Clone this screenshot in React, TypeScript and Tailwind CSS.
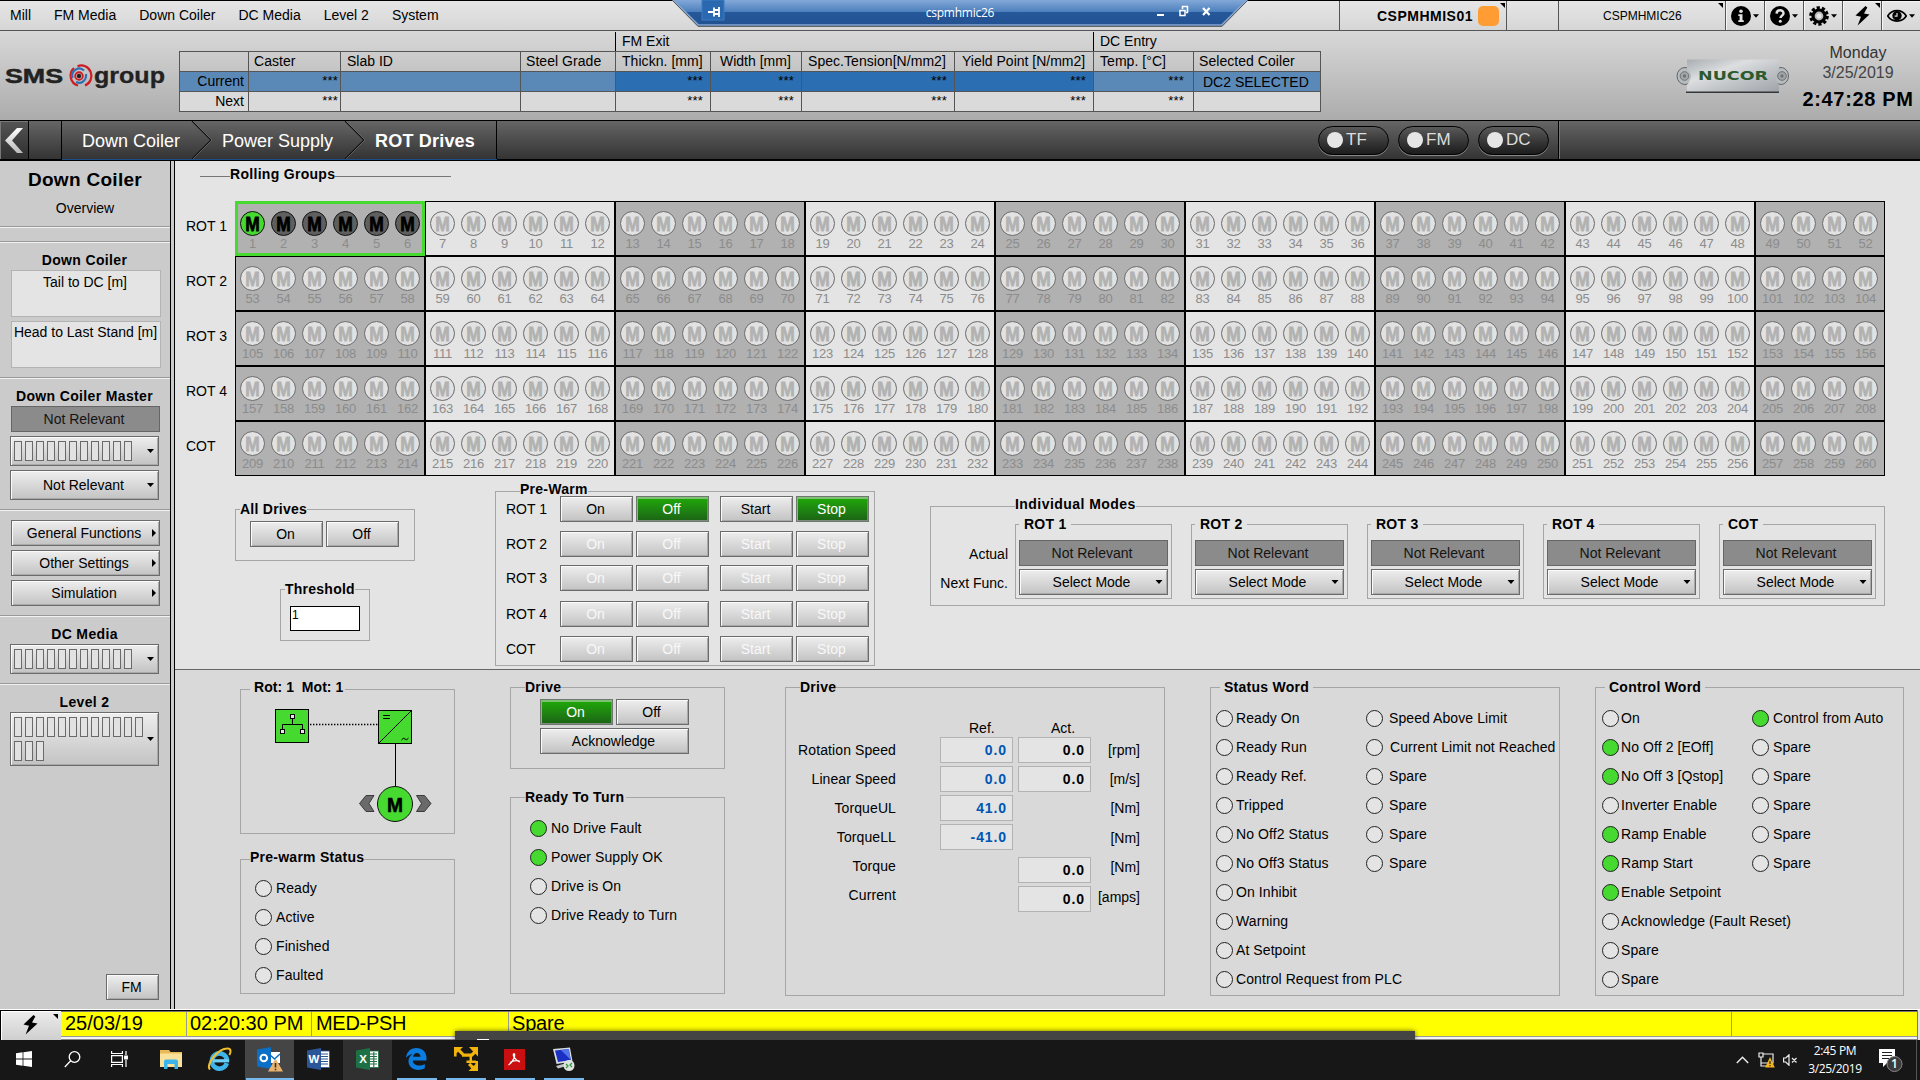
import React from 'react';

type Kids = { children?: React.ReactNode };

/* ---------- shared controls ---------- */

function Caret({ className = '' }: { className?: string }) {
  return (
    <svg width="7" height="4" viewBox="0 0 7 4" className={'shrink-0 ' + className}>
      <path d="M0 0h7L3.5 4z" fill="#000" />
    </svg>
  );
}

function Corner({ className = '' }: { className?: string }) {
  return (
    <svg width="5" height="5" viewBox="0 0 5 5" className={className}>
      <path d="M0 0h5v5z" fill="#000" />
    </svg>
  );
}

const RAISED =
  'border border-[#6b6b6b] bg-linear-to-b from-[#eeeeee] to-[#c3c3c3] shadow-[inset_1px_1px_0_#fbfbfb,inset_-1px_-1px_0_#a9a9a9]';
const GREEN =
  'border border-[#6f776f] bg-linear-to-b from-[#1fab04] to-[#1b6414] shadow-[inset_1px_2px_0_#7cc274,inset_-1px_-1px_0_#7f8a7f]';

function Button({
  children,
  tone = 'normal',
  className = 'w-[73px]',
}: Kids & { tone?: 'normal' | 'green' | 'disabled'; className?: string }) {
  const look =
    tone === 'green' ? GREEN + ' text-white' : tone === 'disabled' ? RAISED + ' text-[#f8f8f8]' : RAISED + ' text-black';
  return (
    <button className={'flex h-[26px] shrink-0 items-center justify-center pr-[2px] ' + look + ' ' + className}>{children}</button>
  );
}

function Readout({ children, className = '' }: Kids & { className?: string }) {
  return (
    <div
      className={
        'flex h-[26px] w-[149px] items-center justify-center border border-[#666] bg-[#8b8b8b] pr-[3px] text-[#141414] ' + className
      }
    >
      {children}
    </div>
  );
}

function Group({
  title,
  bg,
  pad = 'pl-[14px]',
  lift = '-mt-px mb-px',
  tracking = 'tracking-[0.25px]',
  titleClass = '',
  className = '',
  children,
}: Kids & {
  title: string;
  bg: string;
  pad?: string;
  lift?: string;
  tracking?: string;
  titleClass?: string;
  className?: string;
}) {
  return (
    <section className={'flex shrink-0 flex-col border border-[#a6a6a6] ' + className}>
      <div className={'flex h-0 shrink-0 items-center ' + lift + ' ' + pad}>
        <span className={'font-bold whitespace-pre ' + tracking + ' ' + bg + ' ' + titleClass}>{title}</span>
      </div>
      {children}
    </section>
  );
}

const HI = 'bg-[#e4e4e4]';
const LO = 'bg-[#d9d9d9]';

/* ---------- header ---------- */

function MenuBar() {
  return (
    <div className="flex h-[31px] border-t border-b border-t-black border-b-[#555] bg-linear-to-b from-[#e6e6e6] to-[#d6d6d6]">
      <nav className="flex items-center gap-[23px] pb-px pl-[10px]">
        {['Mill', 'FM Media', 'Down Coiler', 'DC Media', 'Level 2', 'System'].map((m) => (
          <span key={m}>{m}</span>
        ))}
      </nav>
      <div className="ml-auto flex">
        <div className="flex w-[167px] items-center border-l border-[#555] pl-[37px]">
          <span className="w-[101px] font-bold tracking-[0.5px]">CSPMHMIS01</span>
          <span className="h-5 w-[21px] shrink-0 rounded-[5px] bg-[#ff9c33]" />
          <Corner className="mt-[2px] ml-[1px] self-start" />
        </div>
        <div className="w-[52px] border-l border-[#555]" />
        <div className="flex w-[167px] items-center border-l border-[#555] pl-[44px] text-xs">
          <span className="w-[115px]">CSPMHMIC26</span>
          <Corner className="mt-[2px] self-start" />
        </div>
        <ToolCell>
          <svg width="20" height="20" viewBox="0 0 20 20">
            <circle cx="10" cy="10" r="10" />
            <circle cx="10" cy="5.3" r="1.8" fill="#e4e4e4" />
            <path d="M7.3 8.3h4.2v6h1.3v1.6H7.3v-1.6h1.3V10H7.3z" fill="#e4e4e4" />
          </svg>
          <Caret className="ml-[2px] w-[6px]" />
        </ToolCell>
        <ToolCell>
          <svg width="20" height="20" viewBox="0 0 20 20">
            <circle cx="10" cy="10" r="10" />
            <path d="M6.600 7.600c.1-4.400 6.900-4.200 6.900-.4 0 2.300-3 2.500-3 4.800" fill="none" stroke="#e4e4e4" strokeWidth="2.500" />
            <circle cx="10.300" cy="15.300" r="1.500" fill="#e4e4e4" />
          </svg>
          <Caret className="ml-[2px] w-[6px]" />
        </ToolCell>
        <ToolCell>
          <svg width="20" height="20" viewBox="0 0 20 20">
            <circle cx="10" cy="10" r="8.300" fill="none" stroke="#000" strokeWidth="3" strokeDasharray="3.200 2.015" />
            <circle cx="10" cy="10" r="6" fill="#bbb" stroke="#000" strokeWidth="3.200" />
            <circle cx="10" cy="10" r="2.500" fill="#e8e8e8" />
          </svg>
          <Caret className="ml-[2px] w-[6px]" />
        </ToolCell>
        <div className="flex w-[39px] border-l border-[#555] pt-[2px] pl-[12px] shadow-[inset_1px_1px_0_#f6f6f6]">
          <Bolt className="mt-[3px]" />
          <Corner className="ml-[5px]" />
        </div>
        <ToolCell>
          <svg width="20" height="16" viewBox="0 0 20 16">
            <path d="M.7 8C5 .8 15 .8 19.300 8 15 14.700 5 14.700.7 8z" fill="none" stroke="#000" strokeWidth="1.700" />
            <circle cx="10" cy="7.700" r="4.700" />
            <path d="M10 5v3.200H7.600" fill="none" stroke="#ddd" strokeWidth="1.200" />
          </svg>
          <Caret className="ml-[2px] w-[6px]" />
        </ToolCell>
      </div>
    </div>
  );
}

function Bolt({ className = '' }: { className?: string }) {
  return (
    <svg width="15" height="20" viewBox="0 0 15 20" className={className}>
      <path d="M10.500 0 .5 9.600l5.500 1.200L2.600 19.600 14.500 8.400 9 7.400l3.300-6z" fill="#000" />
    </svg>
  );
}

function ToolCell({ children }: Kids) {
  return (
    <div className="flex w-[39px] items-center border-l border-[#555] pl-[5px] shadow-[inset_1px_1px_0_#f6f6f6]">
      {children}
    </div>
  );
}

function RemoteBar() {
  return (
    <div className="absolute top-0 left-[672px] h-[27px] w-[576px]">
      <svg width="576" height="27" viewBox="0 0 576 27" className="absolute inset-0">
        <defs>
          <linearGradient id="rb" x1="0" y1="0" x2="0" y2="1">
            <stop offset="0" stopColor="#83a8d8" />
            <stop offset="0.45" stopColor="#4d80bd" />
            <stop offset="0.47" stopColor="#25589a" />
            <stop offset="1" stopColor="#235190" />
          </linearGradient>
        </defs>
        <path d="M0 0 26 26H550L576 0z" fill="url(#rb)" />
        <path d="M1 0 26.500 25H549.500L575 0" fill="none" stroke="#86a7d2" strokeWidth="1.500" />
        <path d="M0 0 26 26.400H550L576 0" fill="none" stroke="#555" strokeWidth="1" />
        <rect x="30" y="0" width="22" height="20" fill="#2a68b0" stroke="#3b7cc2" />
        <path d="M36 12h6M42 7.500v9M42 14h5.500M42 10h5.500M47 7v10" stroke="#fff" strokeWidth="1.800" fill="none" />
        <rect x="485" y="14" width="7" height="2" fill="#fff" />
        <path d="M508 10.500h5v5h-5zM510.500 9V6.500h5v6H514" stroke="#fff" strokeWidth="1.500" fill="none" />
        <path d="m531 8 6.500 7M537.500 8 531 15" stroke="#fff" strokeWidth="2.200" fill="none" />
      </svg>
      <div className="relative flex h-[26px] items-center justify-center font-['Open_Sans','Noto_Sans',sans-serif] text-[12px] tracking-[-0.25px] text-white">
        cspmhmic26
      </div>
    </div>
  );
}

const COLS: [string, string, string, string][] = [
  ['', 'Current', 'Next', 'w-[69px]'],
  ['Caster', '***', '***', 'w-[92px]'],
  ['Slab ID', '', '', 'w-[180px]'],
  ['Steel Grade', '', '', 'w-[95px]'],
  ['Thickn. [mm]', '***', '***', 'w-[95px]'],
  ['Width [mm]', '***', '***', 'w-[91px]'],
  ['Spec.Tension[N/mm2]', '***', '***', 'w-[153px]'],
  ['Yield Point [N/mm2]', '***', '***', 'w-[139px]'],
  ['Temp. [°C]', '***', '***', 'w-[100px]'],
  ['Selected Coiler', 'DC2 SELECTED', '', 'w-[127px]'],
];

function SlabTable() {
  return (
    <div className="mt-px -ml-px flex w-[1142px] flex-col">
      <div className="flex h-[19px] pl-[436px]">
        <div className="w-[478px] border-l border-black pt-px pl-[6px]">FM Exit</div>
        <div className="w-[100px] border-l border-black pt-px pl-[6px]">DC Entry</div>
      </div>
      <div className="flex border-t border-r border-[#555]">
        {COLS.map(([h, cur, next, w], i) => {
          const strong = i >= 4 && i <= 7;
          const stars = cur === '***';
          const align =
            i === 9
              ? 'pl-[9px]'
              : stars
                ? 'justify-end pb-[2px] text-[13px] tracking-[0.2px] ' + (i === 1 ? 'pr-[2px]' : i === 8 ? 'pr-[9px]' : 'pr-[7px]')
                : 'justify-end pr-[4px] pb-px';
          return (
            <div key={i} className={'flex flex-col border-l border-[#555] ' + w}>
              <div className={'flex h-[19px] items-center pb-[2px] ' + (i < 4 || i > 8 ? 'pl-[5px]' : 'pl-[6px]')}>
                <span className={i === 5 ? 'pl-[3px]' : i === 7 ? 'pl-px' : i === 2 ? 'pl-px' : 'tracking-[0.05px]'}>{h}</span>
              </div>
              <div
                className={
                  'flex h-[20px] items-center border-t border-[#555] ' + (strong ? 'bg-[#2c6eb2] ' : 'bg-[#5b89b7] ') + align
                }
              >
                {cur}
              </div>
              <div className={'flex h-[21px] items-center border-t border-b border-[#555] bg-[#dadada] ' + align}>{next}</div>
            </div>
          );
        })}
      </div>
    </div>
  );
}

function Banner() {
  return (
    <div className="flex h-[89px] bg-linear-to-b from-[#d8d8d8] to-[#acacac]">
      <div className="w-[180px] pt-[30px] pl-[4px]">
        <svg width="166" height="32" viewBox="0 0 166 32">
          <g fontFamily="Liberation Sans" fontWeight="bold" fill="#222">
            <text x="1" y="22" fontSize="21" textLength="58" lengthAdjust="spacingAndGlyphs" stroke="#222" strokeWidth=".5">
              SMS
            </text>
            <text x="90" y="22" fontSize="22" textLength="71" lengthAdjust="spacingAndGlyphs" stroke="#222" strokeWidth=".3">
              group
            </text>
          </g>
          <g fill="none" strokeWidth="2.200">
            <path d="M74 24.500A10 10.200 0 0 1 70 7" stroke="#cf1c22" />
            <path d="M73.500 5.200A10 10.200 0 0 1 81 24.500" stroke="#cf1c22" />
            <path d="M68.500 17A7 7.500 0 0 1 80 9.500" stroke="#2f6fb4" />
            <path d="M82 13A7 7.500 0 0 1 72 21" stroke="#2f6fb4" />
            <circle cx="75" cy="15" r="3.800" stroke="#cf1c22" strokeWidth="1.900" />
          </g>
          <circle cx="75" cy="15" r="2.200" fill="#222" />
        </svg>
      </div>
      <SlabTable />
      <div className="ml-auto flex w-[244px]">
        <svg width="113" height="36" viewBox="0 0 113 36" className="mt-[27px] shrink-0">
          <defs>
            <linearGradient id="pl" x1="0" y1="0" x2="1" y2="1">
              <stop offset="0" stopColor="#a9adb1" />
              <stop offset="0.35" stopColor="#dcdee0" />
              <stop offset="0.6" stopColor="#c3c6c9" />
              <stop offset="1" stopColor="#9fa3a7" />
            </linearGradient>
          </defs>
          <ellipse cx="9" cy="18" rx="8" ry="8.500" fill="#b9bcbf" stroke="#63676b" />
          <ellipse cx="105" cy="18" rx="7.500" ry="8.500" fill="#b9bcbf" stroke="#63676b" />
          <path d="M11 1.500H103V11Q99 14 99 18T103 27V34H11V27Q15 22 15 18T11 11z" fill="url(#pl)" />
          <path d="M10 34.300H103" stroke="#33373a" strokeWidth="1.600" />
          <circle cx="8.500" cy="18" r="4.300" fill="#a3a6a9" stroke="#6d7174" />
          <circle cx="106" cy="18" r="4.300" fill="#a3a6a9" stroke="#6d7174" />
          <circle cx="8.500" cy="18" r="1.700" fill="#707478" />
          <circle cx="106" cy="18" r="1.700" fill="#707478" />
          <text
            x="22"
            y="21.500"
            fontFamily="DejaVu Sans"
            fontWeight="bold"
            fontSize="11.500"
            fill="#2c5a2e"
            textLength="70"
            lengthAdjust="spacingAndGlyphs"
          >
            NUCOR
          </text>
        </svg>
        <div className="ml-[7px] flex w-[124px] flex-col items-center pt-[14px] text-base leading-4">
          <span className="text-[#333]">Monday</span>
          <span className="mt-[4px] text-[#444]">3/25/2019</span>
          <span className="mt-[8px] text-[20px] leading-5 font-bold tracking-[0.65px] text-black">2:47:28 PM</span>
        </div>
      </div>
    </div>
  );
}

function CrumbArrow() {
  return (
    <svg width="21" height="38" viewBox="0 0 21 38" className="shrink-0">
      <path d="M1 0 20 19 1 38" fill="none" stroke="#111" strokeWidth="1.200" />
      <path d="M2 0 21 19 2 38" fill="none" stroke="#777" strokeWidth="0.700" />
    </svg>
  );
}

function NavBar() {
  return (
    <div className="flex h-[41px] border-t border-b-2 border-black bg-linear-to-b from-[#666] to-[#343434] text-[18px] text-white">
      <div className="flex w-[29px] items-center border-r border-black bg-linear-to-b from-[#555] to-[#2e2e2e] pl-[5px] shadow-[inset_1px_1px_0_#777]">
        <svg width="18" height="25" viewBox="0 0 18 25">
          <defs>
            <linearGradient id="bk" x1="0" y1="0" x2="0" y2="1">
              <stop offset="0" stopColor="#fff" />
              <stop offset="1" stopColor="#bbb" />
            </linearGradient>
          </defs>
          <path d="M12 0h6L7 12.500 18 25h-6L0 12.500z" fill="url(#bk)" />
        </svg>
      </div>
      <div className="w-[33px] border-r border-black" />
      <div className="flex w-[435px] items-center border-r border-black pl-[20px] shadow-[0_1px_0_#1d4f8c]">
        <span className="w-[109px] pt-px">Down Coiler</span>
        <CrumbArrow />
        <span className="w-[132px] pt-px pl-[10px]">Power Supply</span>
        <CrumbArrow />
        <span className="pt-px pl-[10px] font-bold tracking-[0.2px]">ROT Drives</span>
      </div>
      <div className="flex flex-1 items-center justify-end gap-[9px] border-r border-black pr-[9px]">
        {['TF', 'FM', 'DC'].map((t) => (
          <div
            key={t}
            className="flex h-[29px] w-[71px] items-center rounded-full border border-black bg-linear-to-b from-[#5a5a5a] to-[#1c1c1c] pl-[8px] shadow-[0_1px_0_#888]"
          >
            <span className="mr-[3px] size-4 rounded-full bg-[#e6e6e6]" />
            <span className="pb-px text-[17px] text-[#ddd]">{t}</span>
          </div>
        ))}
      </div>
      <div className="w-[361px] shadow-[inset_1px_0_0_#777]" />
    </div>
  );
}

/* ---------- sidebar ---------- */

function Slots({ n }: { n: number }) {
  return (
    <div className="flex w-[138px] flex-wrap gap-x-[3px] gap-y-[4px]">
      {Array.from({ length: n }, (_, i) => (
        <span key={i} className="h-[20px] w-[8px] border border-[#6a6a6a] bg-[#e2e2e2]" />
      ))}
    </div>
  );
}

function Rule({ className = '' }: { className?: string }) {
  return <div className={'h-[2px] shrink-0 border-t border-b border-t-[#999] border-b-[#f2f2f2] ' + className} />;
}

function SideTitle({ children, className = '' }: Kids & { className?: string }) {
  return <div className={'h-4 shrink-0 pr-px text-center font-bold tracking-[0.35px] ' + className}>{children}</div>;
}

function SlotSelect({ n, className = '' }: { n: number; className?: string }) {
  return (
    <div className={'ml-[10px] flex w-[149px] shrink-0 items-center pl-[3px] ' + RAISED + ' ' + className}>
      <Slots n={n} />
      <Caret className="-ml-[5px]" />
    </div>
  );
}

function Sidebar() {
  return (
    <aside className="flex w-[175px] shrink-0 border-r border-black bg-[#cbcbcb]">
      <div className="flex w-[171px] flex-col border-r border-black">
        <div className="mt-[8px] h-[22px] shrink-0 text-center text-[19px] leading-[22px] font-bold tracking-[0.3px]">Down Coiler</div>
        <div className="mt-[9px] h-4 shrink-0 text-center">Overview</div>
        <Rule className="mt-[10px]" />
        <Rule className="mt-[13px]" />
        <SideTitle className="mt-[9px]">Down Coiler</SideTitle>
        <div className="mt-[2px] ml-[11px] h-[47px] w-[150px] shrink-0 border border-[#b3b3b3] bg-[#e4e4e4] pt-[3px] pr-[2px] text-center">
          Tail to DC [m]
        </div>
        <div className="mt-[4px] ml-[11px] h-[47px] w-[150px] shrink-0 border border-[#b3b3b3] bg-[#e4e4e4] pt-[2px] pr-px text-center whitespace-nowrap">
          Head to Last Stand [m]
        </div>
        <Rule className="mt-[9px]" />
        <SideTitle className="mt-[9px]">Down Coiler Master</SideTitle>
        <Readout className="mt-[2px] ml-[11px] shrink-0">Not Relevant</Readout>
        <SlotSelect n={11} className="mt-[4px] h-[30px]" />
        <div className={'mt-[4px] ml-[10px] flex h-[30px] w-[149px] shrink-0 items-center pl-[32px] ' + RAISED}>
          <span className="w-[104px]">Not Relevant</span>
          <Caret />
        </div>
        <Rule className="mt-[9px]" />
        <div className="mt-[9px] ml-[11px] flex shrink-0 flex-col gap-[4px]">
          {['General Functions', 'Other Settings', 'Simulation'].map((t) => (
            <div key={t} className={'flex h-[26px] w-[149px] items-center ' + RAISED}>
              <span className="w-[140px] pl-[4px] text-center">{t}</span>
              <svg width="4" height="8" viewBox="0 0 4 8">
                <path d="M0 0l4 4-4 4z" />
              </svg>
            </div>
          ))}
        </div>
        <Rule className="mt-[9px]" />
        <SideTitle className="mt-[9px]">DC Media</SideTitle>
        <SlotSelect n={11} className="mt-[2px] h-[30px]" />
        <Rule className="mt-[9px]" />
        <SideTitle className="mt-[9px]">Level 2</SideTitle>
        <SlotSelect n={15} className="mt-[2px] h-[54px]" />
        <Button className="mt-auto mb-[9px] ml-[106px] w-[53px]">FM</Button>
      </div>
    </aside>
  );
}

/* ---------- motors ---------- */

function Motor({ kind, n }: { kind: 'green' | 'dark' | 'idle'; n: number }) {
  const fill = kind === 'green' ? '#46d92f' : kind === 'dark' ? '#5f5f5f' : '#e2e2e2';
  const stroke = kind === 'idle' ? '#6a6a6a' : '#111';
  const ink = kind === 'idle' ? '#b2b2b2' : '#000';
  return (
    <div className="flex w-[25px] flex-col items-center">
      <svg width="25" height="25" viewBox="0 0 25 25" className="shrink-0">
        <circle cx="12.500" cy="12.500" r="12" fill={fill} stroke={stroke} />
        <text
          x="5.300"
          y="20"
          fontFamily="Liberation Sans"
          fontWeight="bold"
          fontSize="20.500"
          textLength="14.500"
          lengthAdjust="spacingAndGlyphs"
          fill={ink}
          stroke={ink}
          strokeWidth="0.800"
        >
          M
        </text>
      </svg>
      <span className="text-[13px] leading-4 tracking-[-0.3px] text-[#8c8c8c]">{n}</span>
    </div>
  );
}

function RollingGrid() {
  return (
    <div className="mt-[19px] flex flex-col">
      {['ROT 1', 'ROT 2', 'ROT 3', 'ROT 4', 'COT'].map((name, r) => (
        <div key={name} className="flex h-[55px]">
          <div className="w-[60px] pt-[17px] pl-[11px]">{name}</div>
          {Array.from({ length: 9 }, (_, g) => {
            const on = r === 0 && g === 0;
            const count = g === 8 ? 4 : 6;
            return (
              <div
                key={g}
                className={
                  'flex gap-[6px] ' +
                  (g === 8 ? 'w-[130px] ' : 'w-[190px] ') +
                  (on ? 'border-3 border-[#46d92f] pt-[7px] pl-[2px] ' : 'border border-black pt-[9px] pl-[4px] ') +
                  (g % 2 === 0 ? 'bg-[#b1b1b1]' : 'bg-[#e4e4e4]')
                }
              >
                {Array.from({ length: count }, (_, i) => (
                  <Motor key={i} n={r * 52 + g * 6 + i + 1} kind={on ? (i === 0 ? 'green' : 'dark') : 'idle'} />
                ))}
              </div>
            );
          })}
        </div>
      ))}
    </div>
  );
}

/* ---------- upper panel ---------- */

function PreWarm() {
  const rows: [string, string][] = [
    ['ROT 1', 'mt-[4px]'],
    ['ROT 2', 'mt-[9px]'],
    ['ROT 3', 'mt-[8px]'],
    ['ROT 4', 'mt-[10px]'],
    ['COT', 'mt-[9px]'],
  ];
  return (
    <Group title="Pre-Warm" bg={HI} pad="pl-[24px]" lift="-mt-[3px] mb-[3px]" className="mt-[15px] ml-[80px] h-[175px] w-[380px]">
      {rows.map(([name, mt], i) => (
        <div key={name} className={'flex h-[26px] shrink-0 items-center pl-[10px] ' + mt}>
          <span className="w-[54px]">{name}</span>
          <Button tone={i ? 'disabled' : 'normal'}>On</Button>
          <Button tone={i ? 'disabled' : 'green'} className="ml-[3px] w-[73px]">
            Off
          </Button>
          <Button tone={i ? 'disabled' : 'normal'} className="ml-[11px] w-[73px]">
            Start
          </Button>
          <Button tone={i ? 'disabled' : 'green'} className="ml-[3px] w-[73px]">
            Stop
          </Button>
        </div>
      ))}
    </Group>
  );
}

function IndividualModes() {
  return (
    <Group
      title="Individual Modes"
      bg={HI}
      pad="pl-[84px]"
      lift="-mt-[3px] mb-[3px]"
      tracking="tracking-[0.45px]"
      className="mt-[30px] ml-[55px] h-[100px] w-[955px]"
    >
      <div className="flex pt-[17px]">
        <div className="flex w-[84px] shrink-0 flex-col items-end pt-[22px] pr-[7px]">
          <span>Actual</span>
          <span className="mt-[13px]">Next Func.</span>
        </div>
        <div className="flex gap-[19px]">
          {['ROT 1', 'ROT 2', 'ROT 3', 'ROT 4', 'COT'].map((m) => (
            <Group key={m} title={m} bg={HI} pad="pl-0" titleClass="px-[5px]" className="h-[75px] w-[157px] pl-[3px]">
              <Readout className="mt-[15px]">Not Relevant</Readout>
              <div className={'mt-[3px] flex h-[26px] w-[149px] items-center ' + RAISED}>
                <span className="w-[135px] pl-[8px] text-center">Select Mode</span>
                <Caret className="w-[8px]" />
              </div>
            </Group>
          ))}
        </div>
      </div>
    </Group>
  );
}

function UpperPanel() {
  return (
    <div className="flex h-[508px] shrink-0 flex-col bg-[#e4e4e4]">
      <div className="flex h-[21px] items-end pl-[25px]">
        <span className="mb-[5px] h-px w-[30px] bg-[#777]" />
        <span className="font-bold tracking-[0.3px]">Rolling Groups</span>
        <span className="mb-[5px] h-px w-[116px] bg-[#777]" />
      </div>
      <RollingGrid />
      <div className="flex items-start">
        <div className="flex w-[240px] flex-col pl-[60px]">
          <Group title="All Drives" bg={HI} pad="pl-[4px]" className="mt-[33px] h-[52px] w-[180px]">
            <div className="flex gap-[3px] pt-[11px] pl-[14px]">
              <Button>On</Button>
              <Button>Off</Button>
            </div>
          </Group>
          <Group title="Threshold" bg={HI} pad="pl-[4px]" className="mt-[28px] ml-[45px] h-[52px] w-[90px]">
            <div className="mt-[16px] ml-[9px] h-[25px] w-[70px] border border-black bg-white pl-[1px] text-xs leading-4">1</div>
          </Group>
        </div>
        <PreWarm />
        <IndividualModes />
      </div>
    </div>
  );
}

/* ---------- lower panel ---------- */

function Lamp({ label, on, gap = 'gap-[4px]' }: { label: string; on?: boolean; gap?: string }) {
  return (
    <div className={'flex h-[29px] shrink-0 items-center whitespace-nowrap ' + gap}>
      <span className={'size-[17px] shrink-0 rounded-full border border-[#222] ' + (on ? 'bg-[#46d92f]' : 'bg-[#e4e4e4]')} />
      <span className="-mt-px tracking-[0.08px]">{label}</span>
    </div>
  );
}

function DriveDiagram() {
  return (
    <svg width="213" height="130" viewBox="241 700 213 130" className="mt-[10px] shrink-0">
      <rect x="275.500" y="709.500" width="33" height="33" fill="#46d92f" stroke="#000" />
      <path d="M292.500 718v6.500M282.500 730v-5.500h20v5.500" fill="none" stroke="#000" />
      <g fill="#e8e8e8" stroke="#000">
        <rect x="290.500" y="714.500" width="4" height="4" />
        <rect x="280.500" y="729.500" width="4" height="4" />
        <rect x="300.500" y="729.500" width="4" height="4" />
      </g>
      <path d="M310 724.500h68" stroke="#000" strokeWidth="1.300" strokeDasharray="1.400 1.600" />
      <rect x="378.500" y="710.500" width="33" height="33" fill="#46d92f" stroke="#000" />
      <path d="M378.500 743.500l33-33M383 715.500h7M383 718.500h7" stroke="#000" fill="none" />
      <path d="M401.500 740q1.800-3 3.500-1t3.500-1" stroke="#000" fill="none" />
      <path d="M395.500 744v43" stroke="#000" />
      <circle cx="395" cy="804" r="17.500" fill="#46d92f" stroke="#111" />
      <text
        x="387"
        y="811.500"
        fontFamily="Liberation Sans"
        fontWeight="bold"
        fontSize="21"
        textLength="16"
        lengthAdjust="spacingAndGlyphs"
        stroke="#000"
        strokeWidth="0.600"
      >
        M
      </text>
      <g fill="#6a6a6a" stroke="#222" strokeWidth="0.800">
        <path d="M366 795.500h8l-5 8 5 8h-8l-6.500-8z" />
        <path d="M424.500 795.500h-8l5 8-5 8h8l6.500-8z" />
      </g>
    </svg>
  );
}

function Field({ v, blue, className = '' }: { v: string; blue?: boolean; className?: string }) {
  return (
    <div
      className={
        'flex h-[26px] w-[73px] shrink-0 items-center justify-end border border-[#b3b3b3] bg-[#e4e4e4] pr-[5px] font-bold tracking-[0.9px] ' +
        (blue ? 'text-[#0056b5] ' : 'text-black ') +
        className
      }
    >
      {v}
    </div>
  );
}

function DriveValues() {
  const rows: [string, string | null, string | null, string, string, string][] = [
    ['Rotation Speed', '0.0', '0.0', '[rpm]', '', ''],
    ['Linear Speed', '0.0', '0.0', '[m/s]', '', ''],
    ['TorqueUL', '41.0', null, '[Nm]', '', ''],
    ['TorqueLL', '-41.0', null, '[Nm]', '', 'mt-px'],
    ['Torque', null, '0.0', '[Nm]', 'mt-[4px]', 'mt-px'],
    ['Current', null, '0.0', '[amps]', 'mt-[4px]', 'mt-[2px]'],
  ];
  return (
    <Group title="Drive" bg={LO} className="mt-[17px] ml-[60px] h-[309px] w-[380px]">
      <div className="mt-[32px] flex h-4 shrink-0 pl-[183px]">
        <span className="w-[82px]">Ref.</span>
        <span>Act.</span>
      </div>
      <div className="mt-[1px] flex flex-col gap-[3px]">
        {rows.map(([l, ref, act, u, am, um]) => (
          <div key={l} className="flex h-[26px] shrink-0">
            <span className="w-[110px] shrink-0 pt-[5px] text-right tracking-[0.1px] whitespace-nowrap">{l}</span>
            <div className="ml-[44px] w-[73px] shrink-0">{ref && <Field v={ref} blue />}</div>
            <div className="ml-[5px] w-[73px] shrink-0">{act && <Field v={act} className={am} />}</div>
            <span className={'w-[49px] shrink-0 pt-[5px] text-right whitespace-nowrap ' + um}>{u}</span>
          </div>
        ))}
      </div>
    </Group>
  );
}

const SPARES = ['Spare', 'Spare', 'Spare', 'Spare'];

function LowerPanel() {
  return (
    <div className="flex min-h-0 flex-1 items-start border-t border-[#666] bg-[#d9d9d9] pl-[65px]">
      <div className="flex flex-col">
        <Group
          title="Rot: 1  Mot: 1"
          bg={LO}
          pad="pl-[9px]"
          lift="-mt-[3px] mb-[3px]"
          tracking="tracking-[0.05px]"
          titleClass="pl-[4px] pr-[2px]"
          className="mt-[19px] h-[145px] w-[215px]"
        >
          <DriveDiagram />
        </Group>
        <Group title="Pre-warm Status" bg={LO} pad="pl-[9px]" lift="-mt-[3px] mb-[3px]" className="mt-[25px] h-[135px] w-[215px]">
          <div className="flex flex-col pt-[14px] pl-[14px]">
            {['Ready', 'Active', 'Finished', 'Faulted'].map((t) => (
              <Lamp key={t} label={t} />
            ))}
          </div>
        </Group>
      </div>
      <div className="ml-[55px] flex flex-col">
        <Group title="Drive" bg={LO} className="mt-[17px] h-[82px] w-[215px]">
          <div className="flex gap-[3px] pt-[11px] pl-[29px]">
            <Button tone="green">On</Button>
            <Button>Off</Button>
          </div>
          <Button className="mt-[3px] ml-[29px] w-[149px]">Acknowledge</Button>
        </Group>
        <Group title="Ready To Turn" bg={LO} titleClass="pr-[2px]" className="mt-[28px] h-[197px] w-[215px]">
          <div className="flex flex-col pt-[16px] pl-[19px]">
            <Lamp label="No Drive Fault" on />
            <Lamp label="Power Supply OK" on />
            <Lamp label="Drive is On" />
            <Lamp label="Drive Ready to Turn" />
          </div>
        </Group>
      </div>
      <DriveValues />
      <Group title="Status Word" bg={LO} pad="pl-[9px]" titleClass="px-[4px]" className="mt-[17px] ml-[45px] h-[309px] w-[350px]">
        <div className="flex pt-[16px] pl-[5px]">
          <div className="flex w-[150px] flex-col">
            {[
              'Ready On',
              'Ready Run',
              'Ready Ref.',
              'Tripped',
              'No Off2 Status',
              'No Off3 Status',
              'On Inhibit',
              'Warning',
              'At Setpoint',
              'Control Request from PLC',
            ].map((t) => (
              <Lamp key={t} label={t} gap="gap-[3px]" />
            ))}
          </div>
          <div className="flex flex-col">
            <Lamp label="Speed Above Limit" gap="gap-[6px]" />
            <Lamp label="Current Limit not Reached" gap="gap-[7px]" />
            {SPARES.map((t, i) => (
              <Lamp key={i} label={t} gap="gap-[6px]" />
            ))}
          </div>
        </div>
      </Group>
      <Group title="Control Word" bg={LO} pad="pl-[9px]" titleClass="px-[4px]" className="mt-[17px] ml-[35px] h-[309px] w-[309px]">
        <div className="flex pt-[16px] pl-[6px]">
          <div className="flex w-[150px] flex-col">
            <Lamp label="On" gap="gap-[2px]" />
            <Lamp label="No Off 2 [EOff]" on gap="gap-[2px]" />
            <Lamp label="No Off 3 [Qstop]" on gap="gap-[2px]" />
            <Lamp label="Inverter Enable" gap="gap-[2px]" />
            <Lamp label="Ramp Enable" on gap="gap-[2px]" />
            <Lamp label="Ramp Start" on gap="gap-[2px]" />
            <Lamp label="Enable Setpoint" on gap="gap-[2px]" />
            <Lamp label="Acknowledge (Fault Reset)" gap="gap-[2px]" />
            <Lamp label="Spare" gap="gap-[2px]" />
            <Lamp label="Spare" gap="gap-[2px]" />
          </div>
          <div className="flex flex-col">
            <Lamp label="Control from Auto" on />
            <Lamp label="Spare" />
            {SPARES.map((t, i) => (
              <Lamp key={i} label={t} />
            ))}
          </div>
        </div>
      </Group>
    </div>
  );
}

/* ---------- alarm line and taskbar ---------- */

function AlarmLine() {
  return (
    <div className="relative flex h-[31px] shrink-0 overflow-hidden border-t border-white bg-[#e2e2e2] text-[20px] leading-[22px]">
      <div className="flex w-[61px] shrink-0 border-t border-l border-black bg-linear-to-b from-[#ececec] to-[#cfcfcf] pt-[4px] pl-[22px] shadow-[inset_1px_1px_0_#fff]">
        <Bolt />
        <Corner className="-mt-px ml-[15px]" />
      </div>
      <div className="flex flex-1 flex-col border-t border-black">
        <div className="flex h-[26px] border-t border-b border-t-[#777] border-b-[#999] bg-[#ffff00]">
          <span className="w-[125px] pl-[4px]">25/03/19</span>
          <span className="w-[125px] border-l border-[#999] pl-[3px]">02:20:30 PM</span>
          <span className="w-[197px] border-l border-[#999] pl-[4px] tracking-[-0.3px]">MED-PSH</span>
          <span className="w-[1223px] border-l border-[#999] pl-[3px] tracking-[-0.2px]">Spare</span>
          <span className="flex-1 border-l border-[#999]" />
        </div>
        <div className="h-[3px] border-b border-[#888] bg-[#f4f4f4]" />
      </div>
      <div className="w-[3px] border-l border-[#777]" />
      <div className="absolute top-[21px] left-[455px] h-[9px] w-[960px] bg-[#444] pt-[8px] pl-[22px] shadow-[0_0_5px_rgba(0,0,0,0.6)]">
        <div className="h-px w-[12px] bg-white" />
      </div>
    </div>
  );
}

function Task({ children, bg = '', line = '' }: Kids & { bg?: string; line?: string }) {
  return (
    <div className={'flex w-[49px] shrink-0 flex-col items-center ' + bg}>
      <div className="flex h-[38px] items-center">{children}</div>
      {line && <div className={'h-[2px] bg-[#76b9ed] ' + line} />}
    </div>
  );
}

function OfficeIcon({ letter, dark, light, lines }: { letter: string; dark: string; light: string; lines: React.ReactNode }) {
  return (
    <svg width="24" height="24" viewBox="0 0 24 24">
      <rect x="11" y="4" width="11.500" height="16.500" fill="#fff" stroke={light} strokeWidth="0.800" />
      {lines}
      <path d="M0 3.500 14 1v22L0 20.500z" fill={dark} />
      <text x="7" y="16.300" textAnchor="middle" fontFamily="Liberation Sans" fontWeight="bold" fontSize="11.500" fill="#fff">
        {letter}
      </text>
    </svg>
  );
}

function Taskbar() {
  return (
    <div className="flex h-[40px] shrink-0 bg-[#171717] font-['Open_Sans','Noto_Sans',sans-serif] text-[12px] text-white">
      <Task>
        <svg width="16" height="16" viewBox="0 0 16 16" className="-ml-px" fill="#fff">
          <path d="M0 2.300 6.600 1.300v6.300H0zM7.400 1.200 16 0v7.600H7.400zM0 8.400h6.600v6.300L0 13.700zM7.400 8.400H16V16l-8.600-1.200z" />
        </svg>
      </Task>
      <Task>
        <svg width="17" height="17" viewBox="0 0 17 17" fill="none" stroke="#fff" strokeWidth="1.300" className="-ml-[3px]">
          <circle cx="10.500" cy="6" r="5.300" />
          <path d="M6.700 9.800.8 16" />
        </svg>
      </Task>
      <Task>
        <svg width="17" height="16" viewBox="0 0 17 16" fill="none" stroke="#fff" strokeWidth="1.200" className="-ml-[6px]">
          <path d="M.6 0v2.500h10.800V0M.6 16v-2.500h10.800V16M.6 4.600h10.800v6.800H.6zM15 0v4M15 9v7" />
          <path d="M13.700 5h2.600v3h-2.600z" fill="#fff" />
        </svg>
      </Task>
      <Task>
        <svg width="22" height="20" viewBox="0 0 22 20" className="-ml-[2px]">
          <path d="M0 1h9l1.500 2H22v15H0z" fill="#e9b955" />
          <path d="M0 4.500h22V18H0z" fill="#fbe29a" />
          <path d="M4 20v-7.500q0-2 2-2h10q2 0 2 2V20h-3.500v-5h-7v5z" fill="#3ab4ea" />
        </svg>
      </Task>
      <Task>
        <svg width="25" height="24" viewBox="0 0 25 24" fill="none" className="-ml-[2px]">
          <path d="M19.800 16.200A7.600 7.600 0 1 1 20 12.800" stroke="#3fb4ea" strokeWidth="4.600" />
          <path d="M6 13.800h16.200" stroke="#6fd0f7" strokeWidth="3.200" />
          <path d="M3 22.500C-2 18 11 1.500 20.500 1.500c4 0 3.500 4 1.800 6.500" stroke="#f2c02c" strokeWidth="2" />
        </svg>
      </Task>
      <Task bg="bg-[#454545]" line="w-[48px]">
        <svg width="28" height="26" viewBox="0 0 28 26" className="ml-[2px]">
          <path d="M12 6h11v11H12z" fill="#fff" />
          <path d="m12 8 5.500 5L23 8" fill="none" stroke="#0e6fc2" strokeWidth="1.500" />
          <path d="M0 3.500 14 1v22L0 20.500z" fill="#0a6fc7" />
          <circle cx="6.800" cy="12" r="3.300" fill="none" stroke="#fff" strokeWidth="2" />
          <path d="m18.500 12.500 7.500 13H11z" fill="#eab36d" />
          <path d="M18.500 17v4.500M18.500 22.800v1.500" stroke="#333" strokeWidth="1.600" />
        </svg>
      </Task>
      <Task>
        <OfficeIcon
          letter="W"
          dark="#2b579a"
          light="#2b579a"
          lines={<path d="M14 7h7M14 9.500h7M14 12h7M14 14.500h7M14 17h7" stroke="#2b579a" strokeWidth="1.100" />}
        />
      </Task>
      <Task bg="bg-[#303030]">
        <OfficeIcon
          letter="X"
          dark="#1e7145"
          light="#1e7145"
          lines={<path d="M14 7h7M14 9.500h7M14 12h7M14 14.500h7M14 17h7M17.800 5v15" stroke="#1e7145" strokeWidth="1.100" />}
        />
      </Task>
      <Task line="w-[40px]">
        <svg width="21" height="22" viewBox="0 0 21 22">
          <path
            d="M0 9.800C.6 4 4.500 0 10.300 0 16.500 0 20.500 4.300 20.500 10v2.600H6.800c.2 5.200 7.200 6.300 12 3.400v4.300C10.500 24.300 2.200 20.400 2.500 12.800 2.700 9.700 4.300 7.300 6.800 6 4.300 6.600 1.600 7.800 0 9.800zM7 8.800h7.500C14.400 3.600 7.600 3.600 7 8.800z"
            fill="#0b7ce0"
          />
        </svg>
      </Task>
      <Task line="w-[40px]">
        <svg width="24" height="24" viewBox="0 0 24 24" fill="#f1b30c">
          <path d="M0 0h9L6.300 2.600 10 6.200 8 8.400 4 4.800 2.600 6.300V9.500H0zM24 0v9.500l-2.600-2.700-3 3-2.300-2.300 3-3L15 0zM24 24h-9.500l2.800-2.700-3.300-3.200 2.200-2.300 3.400 3.300 1.800-1.900V14H24z" />
          <path d="M8 6.500h10v3.200H8zM15.500 8h2.500v5.500h4V16h-9.500v-2.500h3z" />
        </svg>
      </Task>
      <Task line="w-[40px]">
        <svg width="21" height="21" viewBox="0 0 21 21">
          <rect width="21" height="21" fill="#c90f0f" />
          <path
            d="M10 4.500c-2 1 .5 6.500 6 8.500M10 4.500c2 1-1 9-5.500 11.500M6 13.500c2-1.500 6-2.200 9.500-1.500"
            fill="none"
            stroke="#fff"
            strokeWidth="1.300"
          />
        </svg>
      </Task>
      <Task line="w-[40px]">
        <svg width="24" height="25" viewBox="0 0 24 25">
          <path d="M1 2 18 .5l2.500 14L4.500 17z" fill="#d8dce2" />
          <path d="M3 3.500 16.800 2l2 11L6 15z" fill="#1a2fc4" />
          <path d="M9 3l7.800-1 2 11z" fill="#5474ea" />
          <path d="m4 19 9-2.500 3 2-10 3z" fill="#c3c7cc" />
          <circle cx="17" cy="18.500" r="5.500" fill="#dfe3df" />
          <path d="m14 17 2 2-2 2M20 16l-2 2 2 2" fill="none" stroke="#2d9a3c" strokeWidth="1.300" />
        </svg>
      </Task>
      <div className="ml-auto flex items-center">
        <svg width="13" height="8" viewBox="0 0 13 8" fill="none" stroke="#eee" strokeWidth="1.400">
          <path d="m.8 7 5.700-5.700L12.200 7" />
        </svg>
        <svg width="17" height="16" viewBox="0 0 17 16" className="ml-[9px]">
          <path d="M1 1h4v4H1zM5 2h10v9H8M3 5v6h5M5 14h6M3 8v6h3" fill="none" stroke="#eee" strokeWidth="1.200" />
          <path d="m12 5 4.800 10.500H7.200z" fill="#f5b61c" />
          <path d="M12 9v3M12 13v1.300" stroke="#222" strokeWidth="1.200" />
        </svg>
        <svg width="15" height="12" viewBox="0 0 15 12" fill="none" stroke="#eee" strokeWidth="1.200" className="ml-[8px]">
          <path d="M.6 4v4h2.200L6 11.200V.8L2.800 4zM9 4l4.500 4.500M13.500 4 9 8.500" />
        </svg>
        <div className="ml-[9px] flex w-[56px] flex-col items-center leading-[18px] tracking-[-0.35px]">
          <span>2:45 PM</span>
          <span>3/25/2019</span>
        </div>
        <svg width="26" height="26" viewBox="0 0 26 26" className="ml-[15px]">
          <path d="M1 2h16v14h-8l-4 4v-4H1z" fill="#fff" />
          <path d="M4 5.500h10M4 8.500h10M4 11.500h7" stroke="#222" strokeWidth="1.200" />
          <circle cx="16.500" cy="17" r="7.500" fill="#3a3a3a" stroke="#888" />
          <text x="16.500" y="21.200" textAnchor="middle" fontFamily="Open Sans" fontWeight="600" fontSize="12" fill="#fff">
            1
          </text>
        </svg>
        <div className="ml-[12px] h-[40px] w-[4px] border-l border-[#555]" />
      </div>
    </div>
  );
}

export default function App() {
  return (
    <div className="relative flex h-[1080px] w-[1920px] flex-col overflow-hidden bg-[#e4e4e4] font-['Liberation_Sans',Arial,sans-serif] text-[14px] leading-4 whitespace-nowrap text-black">
      <MenuBar />
      <Banner />
      <NavBar />
      <div className="flex h-[848px] shrink-0">
        <Sidebar />
        <main className="flex min-w-0 flex-1 flex-col">
          <UpperPanel />
          <LowerPanel />
        </main>
      </div>
      <AlarmLine />
      <Taskbar />
      <RemoteBar />
    </div>
  );
}
